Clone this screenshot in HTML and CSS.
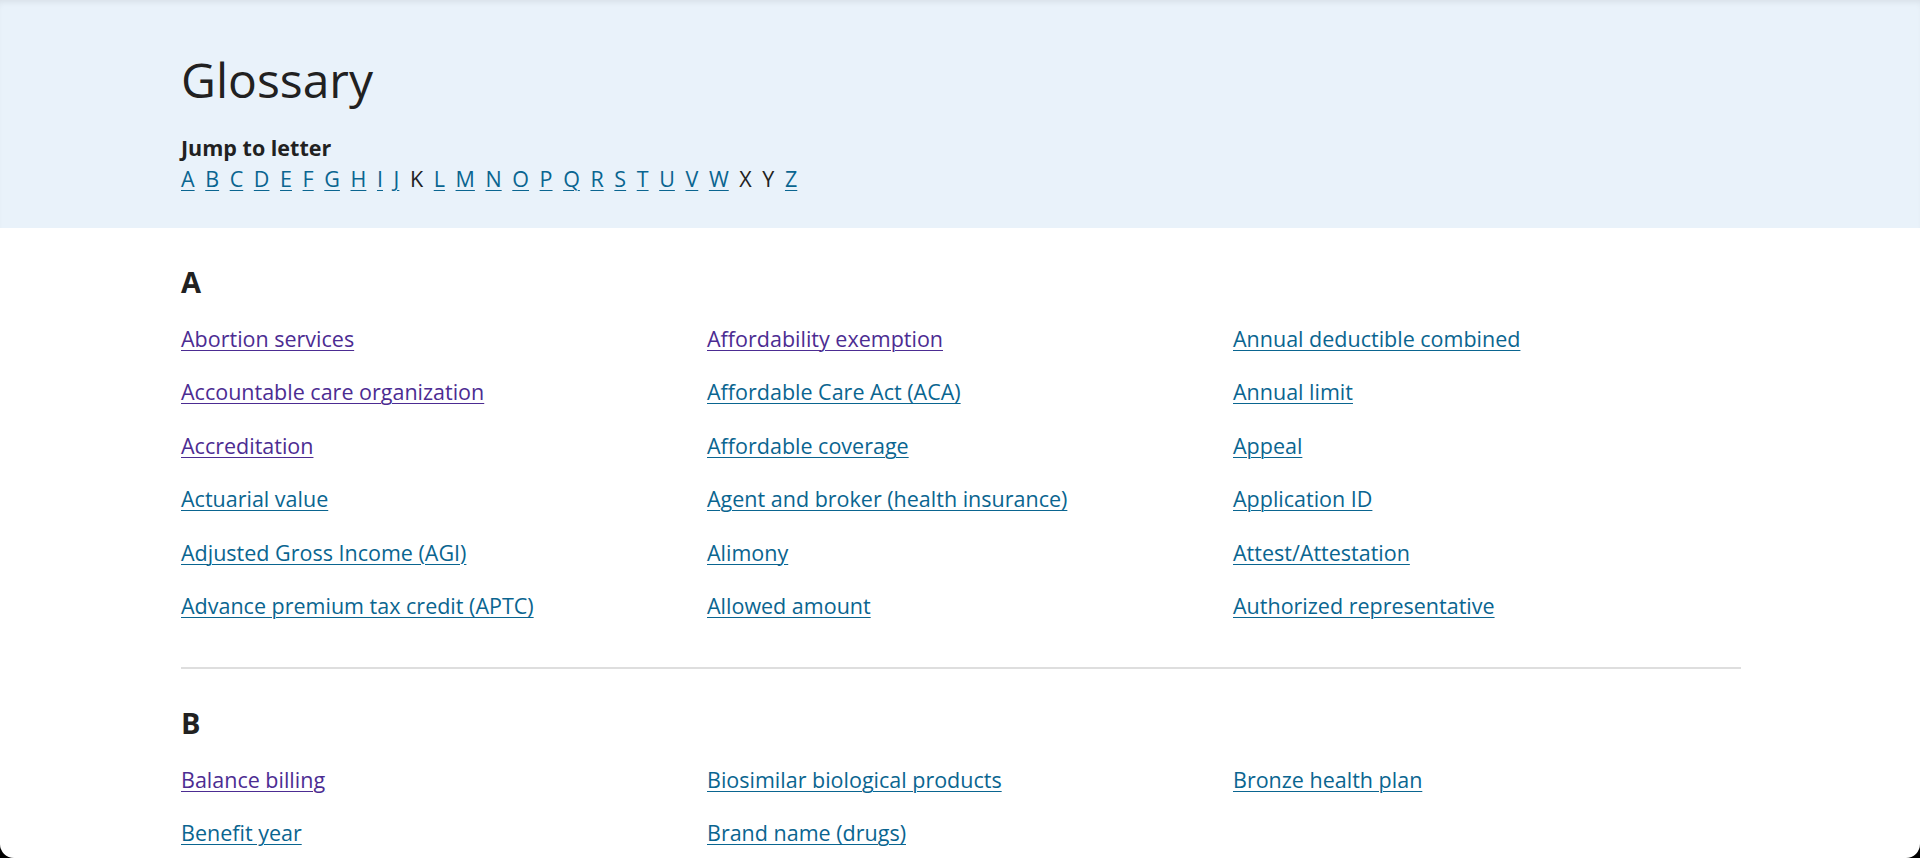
FILE: index.html
```html
<!DOCTYPE html>
<html lang="en">
<head>
<meta charset="utf-8">
<title>Glossary</title>
<link rel="stylesheet" href="styles.css">
</head>
<body>
<div class="window">
  <header class="hero">
    <div class="container">
      <h1 class="title">Glossary</h1>
      <p class="jump-label">Jump to letter</p>
      <nav class="letters">
        <a href="#a">A</a><a href="#b">B</a><a href="#c">C</a><a href="#d">D</a><a href="#e">E</a><a href="#f">F</a><a href="#g">G</a><a href="#h">H</a><a href="#i">I</a><a href="#j">J</a><span>K</span><a href="#l">L</a><a href="#m">M</a><a href="#n">N</a><a href="#o">O</a><a href="#p">P</a><a href="#q">Q</a><a href="#r">R</a><a href="#s">S</a><a href="#t">T</a><a href="#u">U</a><a href="#v">V</a><a href="#w">W</a><span>X</span><span>Y</span><a href="#z">Z</a>
      </nav>
    </div>
  </header>
  <main class="container">
    <section class="letter-section" id="a">
      <h2 class="letter-heading">A</h2>
      <ul class="terms rows-6">
        <li><a class="visited" href="#">Abortion services</a></li>
        <li><a class="visited" href="#">Accountable care organization</a></li>
        <li><a class="visited" href="#">Accreditation</a></li>
        <li><a href="#">Actuarial value</a></li>
        <li><a href="#">Adjusted Gross Income (AGI)</a></li>
        <li><a href="#">Advance premium tax credit (APTC)</a></li>
        <li><a class="visited" href="#">Affordability exemption</a></li>
        <li><a href="#">Affordable Care Act (ACA)</a></li>
        <li><a href="#">Affordable coverage</a></li>
        <li><a href="#">Agent and broker (health insurance)</a></li>
        <li><a href="#">Alimony</a></li>
        <li><a href="#">Allowed amount</a></li>
        <li><a href="#">Annual deductible combined</a></li>
        <li><a href="#">Annual limit</a></li>
        <li><a href="#">Appeal</a></li>
        <li><a href="#">Application ID</a></li>
        <li><a href="#">Attest/Attestation</a></li>
        <li><a href="#">Authorized representative</a></li>
      </ul>
    </section>
    <section class="letter-section" id="b">
      <h2 class="letter-heading">B</h2>
      <ul class="terms rows-2">
        <li><a class="visited" href="#">Balance billing</a></li>
        <li><a href="#">Benefit year</a></li>
        <li><a href="#">Biosimilar biological products</a></li>
        <li><a href="#">Brand name (drugs)</a></li>
        <li><a href="#">Bronze health plan</a></li>
      </ul>
    </section>
  </main>
</div>
</body>
</html>
```

FILE: styles.css
```css
html {
  background: #000;
}
body {
  margin: 0;
  font-family: "Open Sans", "Noto Sans", sans-serif;
  color: #212121;
}
.window {
  height: 858px;
  overflow: hidden;
  background: #fff;
  border-radius: 0 0 14px 14px;
}
.container {
  width: 1562px;
  margin: 0 auto;
  padding-left: 2px;
  box-sizing: border-box;
}
.hero {
  background: #e9f2fa;
  box-shadow: inset 0 5px 6px -3px rgba(0, 0, 0, 0.08);
  padding: 52px 0 33px;
}
.title {
  margin: 0;
  font-size: 48px;
  line-height: 56px;
  font-weight: 400;
  color: #212121;
}
.jump-label {
  margin: 25px 0 0;
  font-size: 21.5px;
  line-height: 30px;
  font-weight: 700;
}
.letters {
  display: flex;
  gap: 10.6px;
  margin-top: 0;
  font-size: 21.5px;
  line-height: 32px;
}
.letters a {
  color: #0a6590;
  text-decoration: underline;
  text-decoration-thickness: 1px;
  text-underline-offset: 3px;
}
.letters span {
  color: #212121;
}
.letter-section {
  padding: 36px 0 45px;
  border-bottom: 2px solid #dedede;
}
.letter-heading {
  margin: 0 0 23px;
  font-size: 29px;
  line-height: 36px;
  font-weight: 700;
}
.terms {
  list-style: none;
  margin: 0;
  padding: 0;
  display: grid;
  grid-auto-flow: column;
  grid-template-columns: repeat(3, 1fr);
  column-gap: 18px;
  row-gap: 21.4px;
  font-size: 21.5px;
  line-height: 32px;
}
.rows-6 {
  grid-template-rows: repeat(6, auto);
}
.rows-2 {
  grid-template-rows: repeat(2, auto);
}
.terms a {
  color: #0a6590;
  text-decoration: underline;
  text-decoration-thickness: 1px;
  text-underline-offset: 3px;
}
.terms a.visited {
  color: #4c2c92;
}
```
